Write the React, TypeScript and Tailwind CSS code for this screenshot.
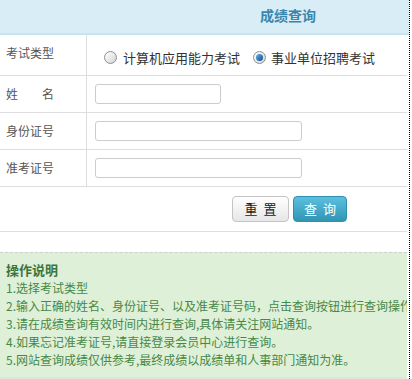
import React from "react";

const font = { fontFamily: '"Noto Sans CJK SC", "Liberation Sans", sans-serif' };

const Radio: React.FC<{ checked?: boolean }> = ({ checked }) => (
  <span className="flex h-[13px] w-[13px] items-center justify-center rounded-full border border-[#8f8f8f] bg-gradient-to-br from-[#ffffff] to-[#d4d4d4]">
    {checked && (
      <span className="h-[7px] w-[7px] rounded-full bg-gradient-to-br from-[#5fb0f0] to-[#0b4f8f]" />
    )}
  </span>
);

const Row: React.FC<{ label: React.ReactNode; h: string; children: React.ReactNode }> = ({ label, h, children }) => (
  <div className={`flex border-b border-[#dddddd] ${h}`}>
    <div className="flex w-[87px] shrink-0 items-center border-r border-[#dddddd] pl-[6px] text-[12px] text-[#555555]">
      {label}
    </div>
    <div className="flex flex-1 items-center pl-[8px]">{children}</div>
  </div>
);

const notes = [
  "1.选择考试类型",
  "2.输入正确的姓名、身份证号、以及准考证号码，点击查询按钮进行查询操作",
  "3.请在成绩查询有效时间内进行查询,具体请关注网站通知。",
  "4.如果忘记准考证号,请直接登录会员中心进行查询。",
  "5.网站查询成绩仅供参考,最终成绩以成绩单和人事部门通知为准。",
];

export default function App() {
  return (
    <div className="h-[379px] w-[412px] overflow-hidden bg-white" style={font}>
      <div className="h-[379px] w-[410px] overflow-hidden border-r border-dotted border-black">
        {/* Header */}
        <div className="flex h-[35px] items-center border-b-2 border-[#c9e4ef] bg-[#d9edf7] pl-[260px] pb-[2px]">
          <span className="text-[14px] font-bold text-[#3a87ad]">成绩查询</span>
        </div>

        {/* Form */}
        <div className="w-[407px]">
          <div className="flex h-[41px] border-b border-[#dddddd]">
            <div className="flex w-[87px] shrink-0 items-center border-r border-[#dddddd] pb-[4px] pl-[6px] text-[12px] text-[#555555]">
              考试类型
            </div>
            <div className="flex flex-1 items-center pl-[17px] pt-[5px] text-[13px] text-[#333333]">
              <label className="flex items-center gap-[6px]">
                <Radio />
                计算机应用能力考试
              </label>
              <label className="ml-[13px] flex items-center gap-[5px]">
                <Radio checked />
                事业单位招聘考试
              </label>
            </div>
          </div>
          <Row
            h="h-[37px]"
            label={
              <span className="flex w-[48px] justify-between">
                <span>姓</span>
                <span>名</span>
              </span>
            }
          >
            <input className="h-[20px] w-[126px] rounded-[3px] border border-[#cccccc] bg-white outline-none" />
          </Row>
          <Row h="h-[37px]" label="身份证号">
            <input className="h-[20px] w-[207px] rounded-[3px] border border-[#cccccc] bg-white outline-none" />
          </Row>
          <Row h="h-[37px]" label="准考证号">
            <input className="h-[20px] w-[207px] rounded-[3px] border border-[#cccccc] bg-white outline-none" />
          </Row>
          <div className="flex h-[45px] items-center gap-[4px] border-b border-[#dddddd] pl-[232px]">
            <button className="h-[26px] w-[57px] rounded-[4px] border border-[#c4c4c4] bg-gradient-to-b from-[#ffffff] to-[#e6e6e6] pl-[6px] text-[13px] tracking-[6px] text-[#222222]">
              重置
            </button>
            <button className="h-[26px] w-[54px] rounded-[4px] border border-[#2f8fb0] bg-gradient-to-b from-[#5bc0de] to-[#2f96b4] pl-[6px] text-[13px] tracking-[6px] text-white">
              查询
            </button>
          </div>
        </div>

        {/* Notes */}
        <div className="mt-[20px] w-[407px] border-b-2 border-[#e3e3e3]">
          <div className="h-[125px] overflow-hidden border-t border-dashed border-[#cfcfcf] bg-[#dff0d8] pl-[6px] pt-[8px] text-[12px] leading-[18px] text-[#468847]">
            <div className="text-[13px] font-bold text-[#3c763d]">操作说明</div>
            {notes.map((n) => (
              <div key={n} className="whitespace-nowrap">
                {n}
              </div>
            ))}
          </div>
        </div>
      </div>
    </div>
  );
}
